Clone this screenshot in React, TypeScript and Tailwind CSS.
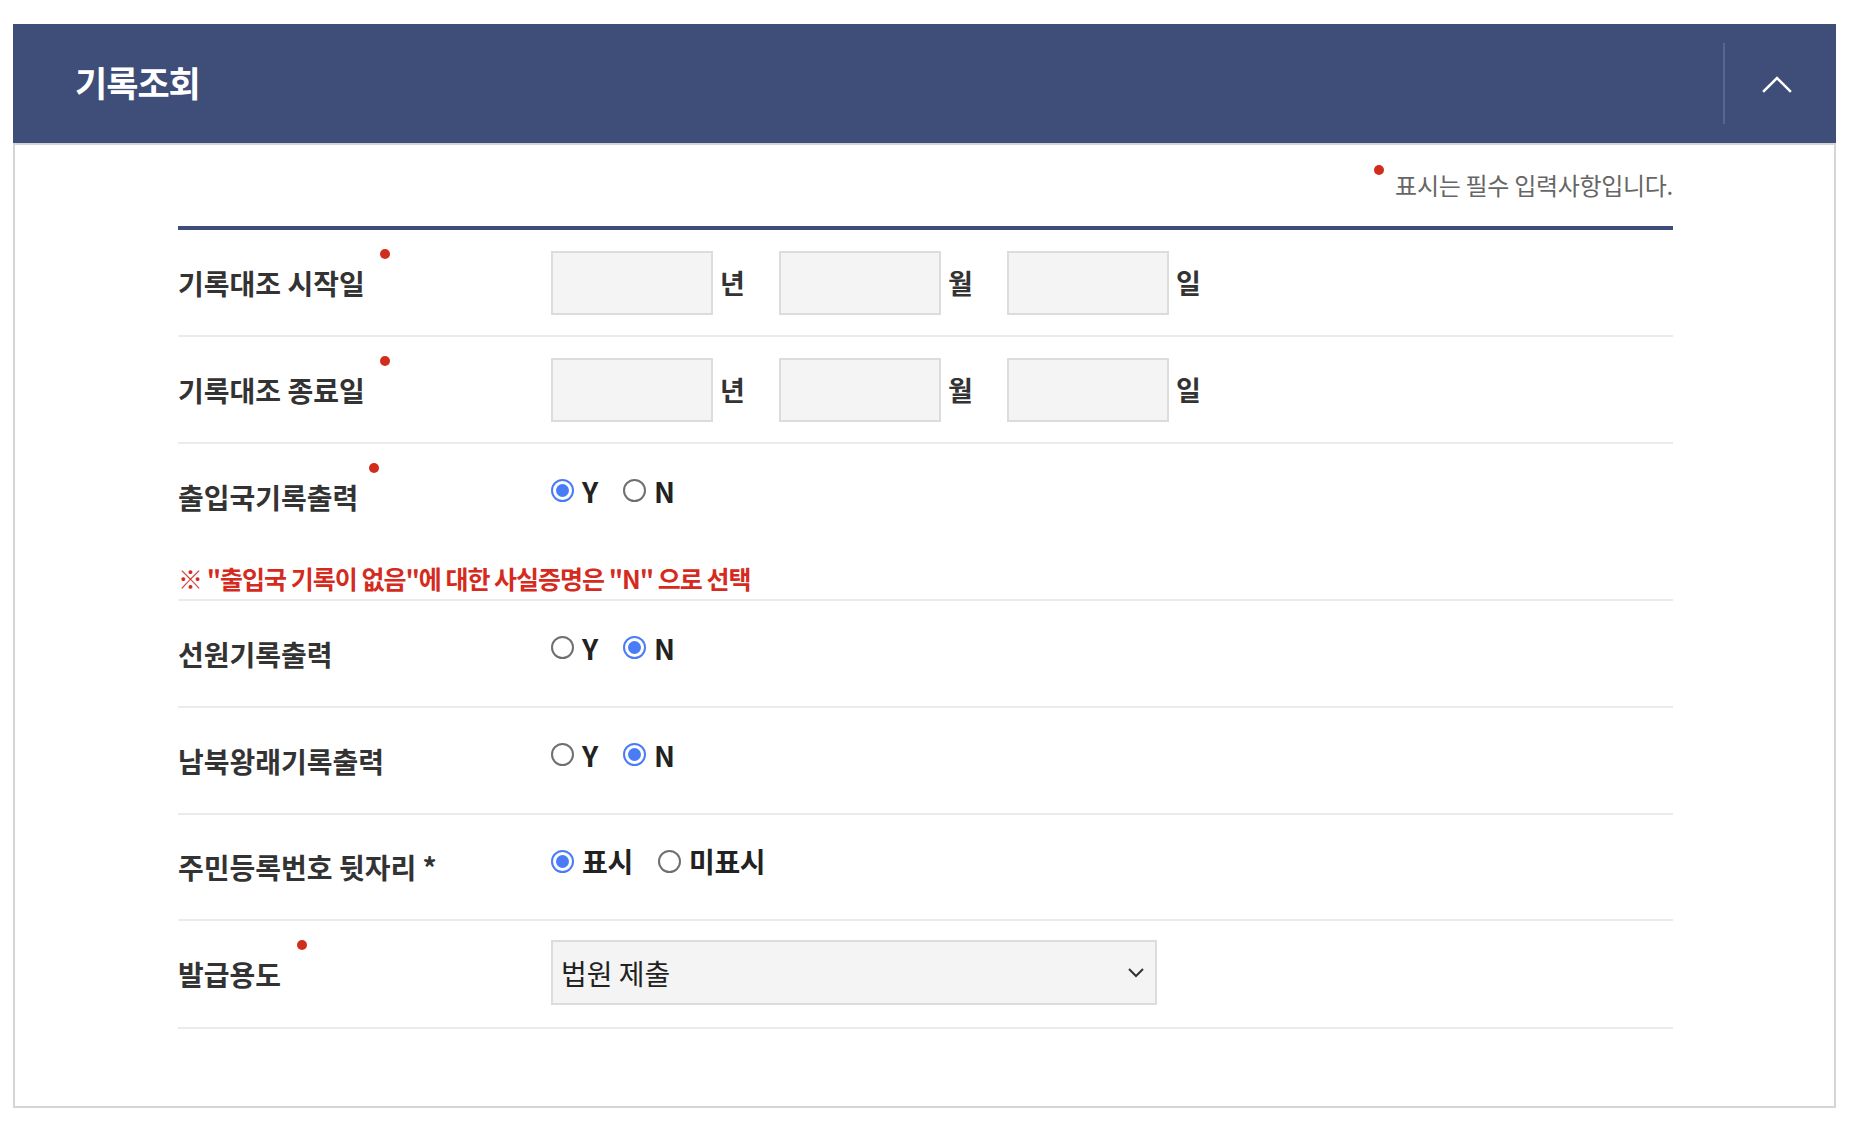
import React from "react";

function Label({ text, req = true, ml = "ml-[13px]" }: { text: string; req?: boolean; ml?: string }) {
  return (
    <div className="w-[373px] shrink-0 flex items-center">
      <span className="text-[28px] font-bold text-[#333] tracking-[0px] leading-[32px]">{text}</span>
      {req && <span className={"inline-block w-[10px] h-[10px] rounded-full bg-[#d22c1c] shrink-0 mb-[58px] " + ml} />}
    </div>
  );
}

function Radio({ checked, label }: { checked: boolean; label: string }) {
  return (
    <label className="flex items-center gap-[8px] cursor-pointer">
      {checked ? (
        <span className="w-[23px] h-[23px] rounded-full border-2 border-[#4a7cf6] flex items-center justify-center bg-white">
          <span className="w-[13px] h-[13px] rounded-full bg-[#4a7cf6]" />
        </span>
      ) : (
        <span className="w-[23px] h-[23px] rounded-full border-2 border-[#6f6f6f] bg-white" />
      )}
      <span className="text-[28px] font-bold text-[#222] tracking-[-0.3px] leading-[32px]">{label}</span>
    </label>
  );
}

function RadioGroup({ options, value }: { options: string[]; value: string }) {
  return (
    <div className="flex items-center gap-[25px] mb-[12px]">
      {options.map((o) => (
        <Radio key={o} checked={o === value} label={o} />
      ))}
    </div>
  );
}

function DateInputs() {
  const units = ["년", "월", "일"];
  return (
    <div className="flex items-center gap-[35px]">
      {units.map((u) => (
        <div key={u} className="flex items-center gap-[7px]">
          <input
            type="text"
            className="w-[162px] h-[64px] border-2 border-[#dcdcdc] bg-[#f4f4f4] outline-none px-3 text-[24px]"
          />
          <span className="w-[24px] text-[27px] font-bold text-[#333] leading-[30px]">{u}</span>
        </div>
      ))}
    </div>
  );
}

export default function App() {
  return (
    <div className="min-h-screen bg-white font-['Noto_Sans_CJK_KR','Noto_Sans',sans-serif] pt-[24px] pl-[13px]">
      <div className="w-[1823px]">
        {/* Header */}
        <div className="h-[119px] bg-[#3e4e78] flex items-center pl-[62px]">
          <h2 className="text-[35px] font-bold text-white tracking-[-1px] leading-none mb-[4px]">기록조회</h2>
          <div className="ml-auto w-[113px] h-[81px] border-l-2 border-[#56668c] flex items-center justify-center pr-[8px]">
            <svg width="30" height="18" viewBox="0 0 30 18" fill="none">
              <polyline points="2,16 15,3 28,16" stroke="#ffffff" strokeWidth="2.5" strokeLinecap="square" />
            </svg>
          </div>
        </div>

        {/* Body */}
        <div className="border-2 border-[#d5d5d5] pt-[25px] pb-[77px] pl-[163px]">
          <div className="w-[1495px]">
            <div className="h-[30px] flex items-center justify-end mb-[26px]">
              <span className="inline-block w-[10px] h-[10px] rounded-full bg-[#d22c1c] mb-[30px] mr-[11px]" />
              <span className="text-[24px] text-[#666] leading-[30px] tracking-[-0.3px]">표시는 필수 입력사항입니다.</span>
            </div>
            <div className="h-[4px] bg-[#3e4e78]" />

            {/* Row 1 */}
            <div className="h-[107px] border-b-2 border-[#ebebeb] flex items-center">
              <Label text="기록대조 시작일" ml="ml-[15px]" />
              <DateInputs />
            </div>

            {/* Row 2 */}
            <div className="h-[107px] border-b-2 border-[#ebebeb] flex items-center">
              <Label text="기록대조 종료일" ml="ml-[15px]" />
              <DateInputs />
            </div>

            {/* Row 3 */}
            <div className="border-b-2 border-[#ebebeb]">
              <div className="h-[105px] flex items-center">
                <Label text="출입국기록출력" ml="ml-[11px]" />
                <RadioGroup options={["Y", "N"]} value="Y" />
              </div>
              <p className="mt-[14px] mb-[6px] leading-[30px] text-[25px] font-bold text-[#d52b1e] tracking-[-1px]">
                ※ "출입국 기록이 없음"에 대한 사실증명은 "N" 으로 선택
              </p>
            </div>

            {/* Row 4 */}
            <div className="h-[107px] border-b-2 border-[#ebebeb] flex items-center">
              <Label text="선원기록출력" req={false} />
              <RadioGroup options={["Y", "N"]} value="N" />
            </div>

            {/* Row 5 */}
            <div className="h-[107px] border-b-2 border-[#ebebeb] flex items-center">
              <Label text="남북왕래기록출력" req={false} />
              <RadioGroup options={["Y", "N"]} value="N" />
            </div>

            {/* Row 6 */}
            <div className="h-[106px] border-b-2 border-[#ebebeb] flex items-center">
              <Label text="주민등록번호 뒷자리 *" req={false} />
              <RadioGroup options={["표시", "미표시"]} value="표시" />
            </div>

            {/* Row 7 */}
            <div className="h-[108px] border-b-2 border-[#ebebeb] flex items-center">
              <Label text="발급용도" ml="ml-[16px]" />
              <div className="w-[606px] h-[65px] mb-[3px] border-2 border-[#dcdcdc] bg-[#f4f4f4] flex items-center justify-between pl-[8px] pr-[10px]">
                <span className="text-[28px] text-[#222] tracking-[0px] leading-[32px]">법원 제출</span>
                <svg width="18" height="11" viewBox="0 0 18 11" fill="none">
                  <polyline points="2,2 9,9 16,2" stroke="#333333" strokeWidth="2" />
                </svg>
              </div>
            </div>
          </div>
        </div>
      </div>
    </div>
  );
}
